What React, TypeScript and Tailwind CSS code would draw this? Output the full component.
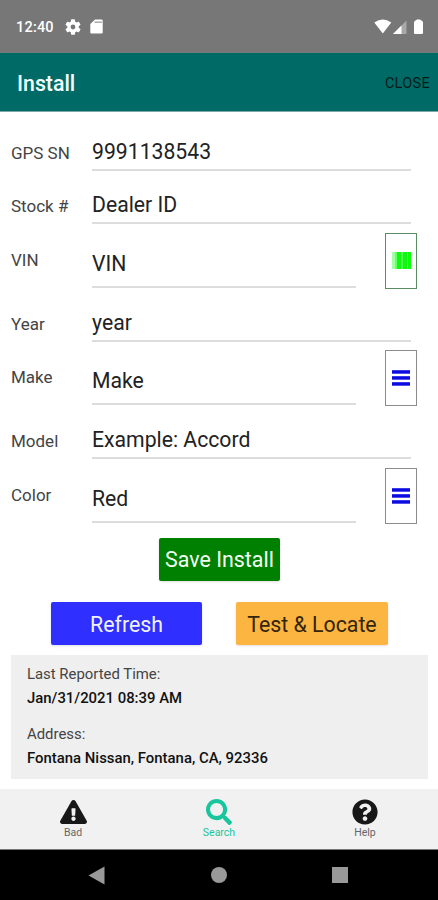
import { FaExclamationTriangle, FaQuestionCircle, FaSearch } from 'react-icons/fa';

type Kind = 'barcode' | 'list';

function BarcodeIcon() {
  return (
    <svg width="19" height="17" viewBox="0 0 19 17" className="mt-[18px]">
      <rect x="0" width="5" height="17" fill="#a4ffa4" />
      <rect x="3" width="2" height="17" fill="#66ff66" />
      <rect x="5" width="4" height="17" fill="#10f810" />
      <rect x="9" width="2" height="17" fill="#50ff50" />
      <rect x="11" width="4" height="17" fill="#10f810" />
      <rect x="15" width="1" height="17" fill="#8cff8c" />
      <rect x="16" width="3" height="17" fill="#08ff08" />
    </svg>
  );
}

function ListIcon() {
  return (
    <svg width="18" height="17" viewBox="0 0 18 17" className="mt-[19px]" fill="#0c0ce2">
      <rect y="0.2" width="18" height="3.5" />
      <rect y="6.200" width="18" height="3.500" />
      <rect y="12.200" width="18" height="3.500" />
    </svg>
  );
}

function Row({ label, value, height, kind }: { label: string; value: string; height: string; kind?: Kind }) {
  return (
    <div className={`flex items-start pl-[11px] ${height}`}>
      <div className="w-[81px] whitespace-nowrap pt-[15px] text-[17px] leading-6 text-[#444]">{label}</div>
      <div
        className={`whitespace-nowrap border-b-2 border-[#dcdcdc] text-[21.2px] leading-6 text-[#222] ${
          kind ? 'h-[55px] w-[264px] pt-[19px]' : 'h-[45px] w-[319px] pt-[14px]'
        }`}
      >
        {value}
      </div>
      {kind && (
        <div
          className={`ml-[29px] flex h-[56px] w-[32px] justify-center border ${
            kind === 'barcode' ? 'border-[#5c8c64]' : 'border-[#8c8c8c]'
          }`}
        >
          {kind === 'barcode' ? <BarcodeIcon /> : <ListIcon />}
        </div>
      )}
    </div>
  );
}

export default function App() {
  return (
    <div className="flex h-[900px] w-[438px] flex-col overflow-hidden bg-white font-[Roboto,'Liberation_Sans',sans-serif]">
      <div className="flex h-[53px] shrink-0 items-center bg-[#777] pl-[16px] text-white">
        <span className="w-[49px] pt-[2px] text-[14.5px] font-medium tracking-[0.2px]">12:40</span>
        <svg width="16" height="16" viewBox="2 2 20 20" fill="currentColor">
          <path d="M19.14 12.94c.04-.3.06-.61.06-.94s-.02-.64-.07-.94l2.03-1.58a.49.49 0 0 0 .12-.61l-1.92-3.32a.49.49 0 0 0-.59-.22l-2.39.96a7 7 0 0 0-1.62-.94l-.36-2.54A.48.48 0 0 0 13.92 2.4h-3.84a.47.47 0 0 0-.47.41l-.36 2.54a7.4 7.4 0 0 0-1.62.94l-2.39-.96a.47.47 0 0 0-.59.22L2.74 8.87a.47.47 0 0 0 .12.61l2.03 1.58a6 6 0 0 0 0 1.88l-2.03 1.58a.49.49 0 0 0-.12.61l1.92 3.32c.12.22.37.29.59.22l2.39-.96c.5.38 1.03.7 1.62.94l.36 2.54c.05.24.24.41.48.41h3.84c.24 0 .44-.17.47-.41l.36-2.54a7 7 0 0 0 1.62-.94l2.39.96c.22.08.47 0 .59-.22l1.92-3.32a.47.47 0 0 0-.12-.61zM12 15a3 3 0 1 1 0-6 3 3 0 0 1 0 6z" />
        </svg>
        <svg width="13" height="15" viewBox="0 0 13 15" className="ml-[9px]">
          <path d="M5 .5h6.5q1.200 0 1.200 1.200v11.600q0 1.200-1.200 1.200h-10Q.3 14.500.3 13.300V5z" fill="#fff" />
          <path d="M4.500 3.200h7.500" stroke="#aaa" strokeWidth="1.500" />
        </svg>
        <svg width="50" height="16" viewBox="0 0 50 16" className="ml-auto mr-[14px]">
          <path d="M.3 3.500Q8.800-2.500 17.300 3.500L8.800 14.500z" fill="#fff" />
          <path d="M32.500 1.500V15H19z" fill="#a9a9a9" />
          <path d="M27.500 6.500V15H19z" fill="#fff" />
          <path d="M41 15q-1 0-1-1V3.500q0-1.200 1.200-1.700L43 .6h3l1.800 1.200Q49 2.300 49 3.500V14q0 1-1 1z" fill="#fff" />
        </svg>
      </div>

      <div className="flex h-[59px] shrink-0 items-center justify-between border-b border-[#7fa9a7] bg-[#006a66] pl-[17px] pr-[8px]">
        <h1 className="pt-[4px] text-[21.3px] font-medium text-[#f4ffff]">Install</h1>
        <span className="pt-[3px] text-[14.5px] tracking-[0.3px] text-[#001c1b]">CLOSE</span>
      </div>

      <div className="mt-[14px] shrink-0">
        <Row label="GPS SN" value="9991138543" height="h-[53px]" />
        <Row label="Stock #" value="Dealer ID" height="h-[54px]" />
        <Row label="VIN" value="VIN" height="h-[64px]" kind="barcode" />
        <Row label="Year" value="year" height="h-[53px]" />
        <Row label="Make" value="Make" height="h-[64px]" kind="list" />
        <Row label="Model" value="Example: Accord" height="h-[54px]" />
        <Row label="Color" value="Red" height="h-[64px]" kind="list" />
      </div>

      <button className="ml-[159px] mt-[6px] h-[43px] w-[121px] shrink-0 whitespace-nowrap rounded-[2px] bg-[#008000] pt-[2px] text-[21.4px] text-[#f4fff4] shadow-sm">
        Save Install
      </button>
      <div className="mt-[21px] flex shrink-0 gap-[34px] pl-[51px] text-[21.3px]">
        <button className="h-[43px] w-[151px] whitespace-nowrap rounded-[2px] bg-[#2f2fff] pt-[2px] text-[#f2f2ff] shadow-sm">Refresh</button>
        <button className="h-[43px] w-[152px] whitespace-nowrap rounded-[2px] bg-[#fbb540] pt-[2px] text-[#33240c] shadow-sm">Test &amp; Locate</button>
      </div>

      <div className="ml-[11px] mt-[10px] h-[124px] w-[417px] shrink-0 bg-[#efefef] pl-[16px] pt-[7px] text-[14.9px] leading-6 text-[#444]">
        <p>Last Reported Time:</p>
        <p className="font-medium text-[#111]">Jan/31/2021 08:39 AM</p>
        <p className="mt-[12px]">Address:</p>
        <p className="font-medium text-[#111]">Fontana Nissan, Fontana, CA, 92336</p>
      </div>

      <div className="mt-[10px] grid h-[61px] shrink-0 grid-cols-3 border-b border-[#777] bg-[#f1f1f1] pt-[10px] text-[10.5px] leading-3 text-[#666]">
        <div className="flex flex-col items-center">
          <FaExclamationTriangle className="h-[26px] w-[27px] text-[#181818]" />
          <span className="mt-[2px]">Bad</span>
        </div>
        <div className="flex flex-col items-center text-[#18c69d]">
          <FaSearch className="h-[26px] w-[26px]" />
          <span className="mt-[2px]">Search</span>
        </div>
        <div className="flex flex-col items-center">
          <FaQuestionCircle className="h-[26px] w-[26px] text-[#181818]" />
          <span className="mt-[2px]">Help</span>
        </div>
      </div>

      <div className="flex flex-1 items-center bg-black">
        <svg width="17" height="19" viewBox="0 0 17 19" className="ml-[88px]">
          <path d="M16.500.5v18L.5 9.500z" fill="#999" />
        </svg>
        <div className="ml-[106px] h-[16px] w-[16px] rounded-full bg-[#999]" />
        <div className="ml-[105px] h-[16px] w-[16px] bg-[#999]" />
      </div>
    </div>
  );
}
